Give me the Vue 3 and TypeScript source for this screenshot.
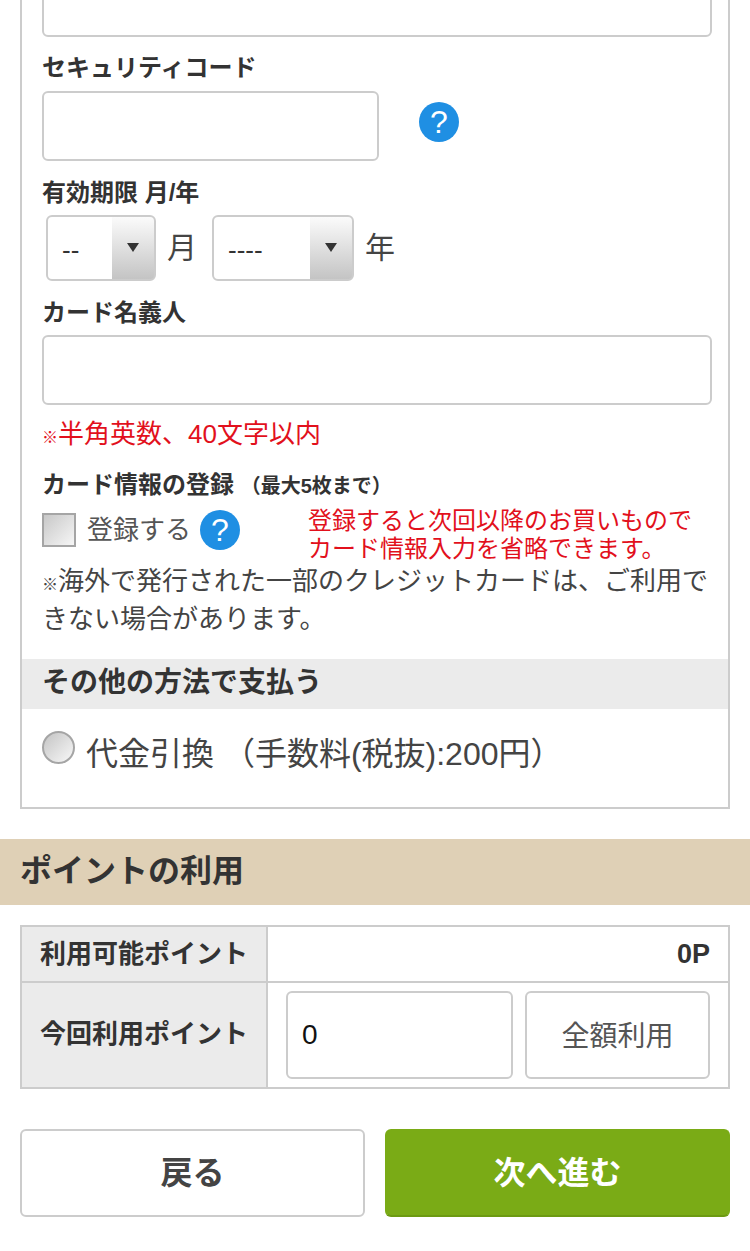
<script setup lang="ts">
import { ref } from "vue";

const months = ["--", "1", "2", "3", "4", "5", "6", "7", "8", "9", "10", "11", "12"];
const years = ["----", "2024", "2025", "2026", "2027", "2028"];

const month = ref("--");
const year = ref("----");
const holder = ref("");
const points = ref("0");
</script>

<template>
  <div class="page">
    <section class="pay-box">
      <input class="text-input first" type="text" aria-label="カード番号" />

      <label class="field-label code-label">セキュリティコード</label>
      <div class="code-row">
        <input class="text-input code-input" type="text" />
        <span class="help">?</span>
      </div>

      <label class="field-label limit-label">有効期限 月/年</label>
      <div class="limit-row">
        <div class="select month">
          <span class="select-value">{{ month }}</span>
          <span class="select-arrow"></span>
          <select v-model="month" aria-label="月">
            <option v-for="m in months" :key="m" :value="m">{{ m }}</option>
          </select>
        </div>
        <span class="unit">月</span>
        <div class="select year">
          <span class="select-value">{{ year }}</span>
          <span class="select-arrow"></span>
          <select v-model="year" aria-label="年">
            <option v-for="y in years" :key="y" :value="y">{{ y }}</option>
          </select>
        </div>
        <span class="unit">年</span>
      </div>

      <label class="field-label holder-label">カード名義人</label>
      <input v-model="holder" class="text-input holder-input" type="text" />
      <p class="red-note"><span class="mark">※</span>半角英数、40文字以内</p>

      <div class="field-label save-label">カード情報の登録 <small>（最大5枚まで）</small></div>
      <div class="save-row">
        <span class="checkbox"></span>
        <span class="save-text">登録する</span>
        <span class="help">?</span>
        <p class="save-note">登録すると次回以降のお買いものでカード情報入力を省略できます。</p>
      </div>
      <p class="notice"><span class="mark">※</span>海外で発行された一部のクレジットカードは、ご利用できない場合があります。</p>

      <h3 class="other-head">その他の方法で支払う</h3>
      <div class="cod-row">
        <span class="radio"></span>
        <span class="cod-text">代金引換 （手数料(税抜):200円）</span>
      </div>
    </section>

    <h2 class="point-head">ポイントの利用</h2>

    <div class="point-table">
      <div class="cell-head row-a">利用可能ポイント</div>
      <div class="cell-value row-a">0P</div>
      <div class="cell-head row-b">今回利用ポイント</div>
      <div class="cell-form">
        <input v-model="points" class="point-input" type="text" />
        <button type="button" class="all-btn">全額利用</button>
      </div>
    </div>

    <div class="actions">
      <button type="button" class="btn btn-back">戻る</button>
      <button type="button" class="btn btn-next">次へ進む</button>
    </div>
  </div>
</template>

<style>
body {
  margin: 0;
  background: #fff;
}
</style>

<style scoped>
.page {
  width: 750px;
  height: 1251px;
  overflow: hidden;
  box-sizing: border-box;
  padding: 0 20px;
  color: #333;
  font-family: "Liberation Sans", "Noto Sans CJK JP", sans-serif;
  background: #fff;
}

.pay-box {
  display: flow-root;
  box-sizing: border-box;
  height: 809px;
  padding: 0 0 0 20px;
  border: solid #ccc;
  border-width: 0 2px 2px;
}

.text-input {
  display: block;
  box-sizing: border-box;
  height: 70px;
  padding: 0 14px;
  background: #fff;
  border: 2px solid #ccc;
  border-radius: 6px;
  outline: none;
}

.first {
  width: 670px;
  margin-top: -33px;
}

.field-label {
  display: block;
  font-weight: 700;
  font-size: 24px;
  line-height: 30px;
}

.code-label {
  margin-top: 16px;
}

.code-row {
  display: flex;
  align-items: flex-start;
  margin-top: 8px;
}

.code-input {
  width: 337px;
}

.help {
  display: block;
  flex: none;
  width: 40px;
  height: 40px;
  color: #fff;
  font-size: 32px;
  line-height: 40px;
  text-align: center;
  background: #1f8fe3;
  border-radius: 50%;
}

.code-row .help {
  margin: 11px 0 0 40px;
}

.limit-label {
  margin-top: 17px;
}

.limit-row {
  display: flex;
  align-items: center;
  height: 66px;
  margin-top: 7px;
  padding-left: 4px;
}

.select {
  position: relative;
  box-sizing: border-box;
  height: 66px;
  background: linear-gradient(#fbfbfb, #c4c4c4) no-repeat right top / 42px 100%, #fff;
  border: 2px solid #ccc;
  border-radius: 6px;
}

.select.month {
  width: 110px;
}

.select.year {
  width: 142px;
}

.select select {
  position: absolute;
  inset: 0;
  width: 100%;
  opacity: 0;
}

.select-value {
  position: absolute;
  left: 14px;
  top: 0;
  color: #333;
  font-size: 26px;
  line-height: 66px;
}

.select-arrow {
  position: absolute;
  right: 15px;
  top: 26px;
  width: 0;
  height: 0;
  border: solid transparent;
  border-width: 9px 6px 0;
  border-top-color: #333;
}

.unit {
  width: 56px;
  padding-left: 11px;
  box-sizing: border-box;
  color: #444;
  font-size: 30px;
  line-height: 66px;
}

.holder-label {
  margin-top: 17px;
}

.holder-input {
  width: 670px;
  margin-top: 7px;
}

.red-note {
  margin: 11px 0 0;
  color: #e2101c;
  font-size: 26px;
  line-height: 36px;
}

.mark {
  font-weight: 900;
  font-family: "Noto Sans CJK JP", sans-serif;
  font-size: 16px;
  line-height: 1;
}

.save-label {
  margin-top: 18px;
}

.save-label small {
  font-size: 20px;
}

.save-row {
  display: flex;
  align-items: center;
  height: 56px;
  margin-top: 1px;
}

.checkbox {
  flex: none;
  box-sizing: border-box;
  width: 34px;
  height: 34px;
  background: linear-gradient(135deg, #c8c8c8, #f6f6f6);
  border: 2px solid #a5a5a5;
}

.save-text {
  margin-left: 11px;
  margin-bottom: 6px;
  color: #555;
  font-size: 26px;
}

.save-row .help {
  margin-left: 9px;
}

.save-note {
  width: 400px;
  margin: 10px 0 0 68px;
  color: #e2101c;
  font-size: 24px;
  line-height: 28px;
}

.notice {
  width: 670px;
  margin: 4px 0 0;
  color: #444;
  font-size: 26px;
  line-height: 38px;
}

.other-head {
  height: 50px;
  margin: 21px 0 0 -20px;
  padding-left: 20px;
  font-size: 28px;
  line-height: 48px;
  background: #ebebeb;
}

.cod-row {
  display: flex;
  align-items: flex-start;
  margin-top: 22px;
}

.radio {
  flex: none;
  box-sizing: border-box;
  width: 33px;
  height: 33px;
  background: linear-gradient(135deg, #c4c4c4, #f8f8f8);
  border: 2px solid #a5a5a5;
  border-radius: 50%;
}

.cod-text {
  margin-left: 11px;
  color: #444;
  font-size: 32px;
  line-height: 46px;
}

.point-head {
  height: 66px;
  margin: 30px -20px 0;
  padding-left: 20px;
  font-size: 32px;
  line-height: 64px;
  background: #dfd0b6;
}

.point-table {
  display: grid;
  grid-template-columns: 246px 1fr;
  grid-template-rows: 56px 104px;
  margin-top: 20px;
  border: 2px solid #ccc;
}

.cell-head {
  padding-left: 18px;
  font-weight: 700;
  font-size: 26px;
  background: #ebebeb;
  border-right: 2px solid #ccc;
}

.row-a {
  line-height: 54px;
  border-bottom: 2px solid #ccc;
}

.row-b {
  line-height: 102px;
}

.cell-value {
  padding-right: 18px;
  font-weight: 700;
  font-size: 27px;
  text-align: right;
}

.cell-form {
  display: flex;
  gap: 12px;
  padding: 8px 18px 0;
}

.point-input {
  box-sizing: border-box;
  width: 227px;
  height: 88px;
  padding: 0 14px;
  color: #111;
  font: inherit;
  font-size: 28px;
  border: 2px solid #ccc;
  border-radius: 6px;
  outline: none;
}

.all-btn {
  width: 185px;
  height: 88px;
  padding: 0 0 2px;
  color: #555;
  font: inherit;
  font-size: 28px;
  background: #fff;
  border: 2px solid #ccc;
  border-radius: 6px;
}

.actions {
  display: flex;
  gap: 20px;
  margin-top: 40px;
}

.btn {
  flex: 1;
  box-sizing: border-box;
  height: 88px;
  padding: 0 0 6px;
  font-weight: 700;
  font-family: inherit;
  font-size: 32px;
  border-radius: 6px;
}

.btn-back {
  color: #444;
  background: #fff;
  border: 2px solid #ccc;
}

.btn-next {
  color: #fff;
  background: #7aab16;
  border: 2px solid #7aab16;
  border-bottom-color: #6c9a12;
}
</style>
